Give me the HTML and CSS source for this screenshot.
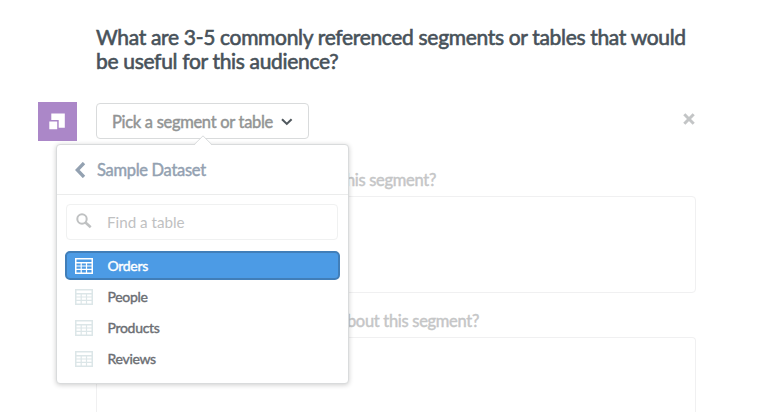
FILE: index.html
```
<!DOCTYPE html>
<html lang="en">
<head>
<meta charset="utf-8">
<title>Segments and tables</title>
<link rel="stylesheet" href="styles.css">
</head>
<body>
<svg class="defs" aria-hidden="true">
  <symbol id="table" viewBox="0 0 18 16">
    <path fill="currentColor" fill-rule="evenodd" d="M0 0H18V16H0ZM1.5 1.5V4H16.5V1.5ZM1.5 5.4V7.4H5.6V5.4ZM6.8 5.4V7.4H10.9V5.4ZM12.1 5.4V7.4H16.5V5.4ZM1.5 8.6V10.7H5.6V8.6ZM6.8 8.6V10.7H10.9V8.6ZM12.1 8.6V10.7H16.5V8.6ZM1.5 12V14.5H5.6V12ZM6.8 12V14.5H10.9V12ZM12.1 12V14.5H16.5V12Z"/>
  </symbol>
</svg>
<main class="page">
  <h1 class="title">What are 3-5 commonly referenced segments or tables that would<br>be useful for this audience?</h1>
  <section class="entry">
    <div class="badge">
      <svg width="17" height="17" viewBox="0 0 17 17"><path fill="#fff" d="M2.3 .5H15.8V14.7H9.7V7H2.3ZM.3 8.4H8.2V16.3H.3Z"/></svg>
    </div>
    <div class="content">
      <div class="toolbar">
        <div class="picker">
          <button class="select"><span class="select-text">Pick a segment or table</span>
            <svg class="chevron" width="12" height="8" viewBox="0 0 12 8"><path d="M1 1.3L5.8 5.9L10.6 1.3" fill="none" stroke="#50585e" stroke-width="2.1"/></svg>
          </button>
          <div class="popover">
            <svg class="arrow" width="18" height="10" viewBox="0 0 18 10"><path d="M1 9.5L9 1L17 9.5V10H1Z" fill="#fff"/><path d="M.5 9.3L9 .8L17.5 9.3" fill="none" stroke="#d9dbdc"/></svg>
            <div class="popover-head">
              <svg width="11" height="16" viewBox="0 0 11 16"><path d="M9 1L2.3 8L9 15" fill="none" stroke="#93a1b1" stroke-width="3.3"/></svg>
              <span class="head-text">Sample Dataset</span>
            </div>
            <div class="search">
              <svg width="16" height="16" viewBox="0 0 16 16"><circle cx="6" cy="6" r="4.7" fill="none" stroke="#bfc1c2" stroke-width="2"/><path d="M9.5 9.5L14.7 14.2" stroke="#bfc1c2" stroke-width="2.6"/></svg>
              <span class="search-text">Find a table</span>
            </div>
            <ul class="list">
              <li class="item selected"><svg class="icon"><use href="#table"/></svg><span class="item-text">Orders</span></li>
              <li class="item"><svg class="icon"><use href="#table"/></svg><span class="item-text">People</span></li>
              <li class="item"><svg class="icon"><use href="#table"/></svg><span class="item-text">Products</span></li>
              <li class="item"><svg class="icon"><use href="#table"/></svg><span class="item-text">Reviews</span></li>
            </ul>
          </div>
        </div>
        <svg class="close" width="12" height="12" viewBox="0 0 12 12"><path d="M1.3 1.3L10.7 10.7M10.7 1.3L1.3 10.7" stroke="#c3c5c6" stroke-width="3"/></svg>
      </div>
      <div class="label first"><span>this segment?</span></div>
      <div class="area"></div>
      <div class="label second"><span>about this segment?</span></div>
      <div class="area last"></div>
    </div>
  </section>
</main>
</body>
</html>
```
FILE: styles.css
```
* { box-sizing: border-box; }
body {
  margin: 0;
  height: 412px;
  overflow: hidden;
  background: #fff;
  font-family: Lato, "Liberation Sans", sans-serif;
}
svg { display: block; flex: none; }
.defs { position: absolute; width: 0; height: 0; }
.page { height: 412px; overflow: hidden; padding: 25px 84px 0 38px; }
.title {
  margin: 0 0 29px 58px;
  font-size: 21px;
  line-height: 24px;
  letter-spacing: -.32px;
  font-weight: 400;
  color: #48525a;
  white-space: nowrap;
  -webkit-text-stroke: .6px #48525a;
}
.entry { display: flex; gap: 19px; }
.badge {
  flex: none;
  width: 39px;
  height: 39px;
  display: flex;
  align-items: center;
  justify-content: center;
  background: #ab87c8;
}
.content { width: 600px; }
.toolbar { display: flex; justify-content: space-between; padding-top: 1px; }
.picker { position: relative; }
.select {
  display: flex;
  align-items: center;
  gap: 8px;
  width: 213px;
  height: 36px;
  padding: 1px 0 0 15px;
  border: 1px solid #d9dbdc;
  border-radius: 4px;
  background: #fff;
  font-family: inherit;
  font-size: 16.5px;
  letter-spacing: -.3px;
  color: #929494;
  white-space: nowrap;
  -webkit-text-stroke: .45px #929494;
}
.close { margin: 10px 1px 0 0; }
.popover {
  position: absolute;
  left: -40px;
  top: 41px;
  width: 293px;
  height: 240px;
  border: 1px solid #d9dbdc;
  border-radius: 4px;
  background: #fff;
  box-shadow: 0 1px 5px rgba(0, 0, 0, .2);
}
.arrow { position: absolute; left: 137px; top: -10px; }
.popover-head {
  display: flex;
  align-items: center;
  gap: 11px;
  height: 50px;
  padding-left: 18px;
  border-bottom: 1px solid #ebecec;
  font-size: 16.5px;
  letter-spacing: -.3px;
  color: #93a1b1;
  -webkit-text-stroke: .45px #93a1b1;
}
.search {
  display: flex;
  gap: 15px;
  height: 36px;
  margin: 9px 10px 11px 9px;
  padding: 8px 0 0 9px;
  border: 1px solid #f0f1f1;
  border-radius: 4px;
  font-size: 15.2px;
  line-height: 18px;
  color: #bfc1c2;
}
.list { margin: 0 8px; padding: 0; list-style: none; }
.item {
  display: flex;
  align-items: center;
  height: 29px;
  margin-bottom: 2px;
  padding-left: 9px;
  gap: 14.5px;
  border: 1px solid transparent;
  border-radius: 5px;
  font-size: 14px;
  letter-spacing: -.3px;
  color: #6b6e73;
  -webkit-text-stroke: .4px #6b6e73;
}
.item.selected {
  border: 2px solid #417eb8;
  padding-left: 8px;
  background: #4c9be5;
  color: #fff;
  -webkit-text-stroke-color: #fff;
}
.icon { width: 18px; height: 16px; color: #dce6e8; }
.selected .icon { color: #fff; }
.label {
  display: flex;
  justify-content: flex-end;
  height: 22px;
  font-size: 16.5px;
  letter-spacing: -.3px;
  line-height: 22px;
  color: #c5c6c7;
  white-space: nowrap;
  -webkit-text-stroke: .45px #c5c6c7;
}
.label.first { width: 340px; margin: 30px 0 5px; }
.label.second { width: 383px; margin: 17px 0 5px; }
.area { height: 97px; border: 1px solid #f0f0f1; border-radius: 4px; }
.area.last { height: 75px; border-bottom: 0; border-radius: 4px 4px 0 0; }
```
